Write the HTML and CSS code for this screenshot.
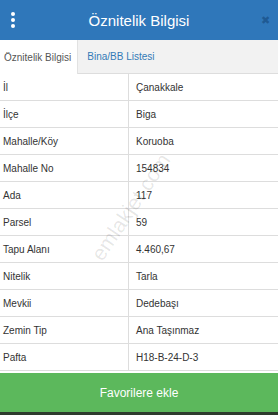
FILE: index.html
```html
<!DOCTYPE html>
<html>
  <head>
    <title>Öznitelik Bilgisi</title>
    <meta name="viewport" content="width=device-width, initial-scale=1">
    <link rel="stylesheet" href="styles.css">
  </head>
  <body>
    <div class="page">
      <div class="header">
        <span class="menu"><i></i><i></i><i></i></span>
        <h1>Öznitelik Bilgisi</h1>
        <span class="close">&#x2716;</span>
      </div>

      <div class="tabs">
        <div class="tab active">Öznitelik Bilgisi</div>
        <div class="tab">Bina/BB Listesi</div>
      </div>

      <div class="content">
        <table class="info">
          <tr><td>İl</td><td>Çanakkale</td></tr>
          <tr><td>İlçe</td><td>Biga</td></tr>
          <tr><td>Mahalle/Köy</td><td>Koruoba</td></tr>
          <tr><td>Mahalle No</td><td>154834</td></tr>
          <tr><td>Ada</td><td>117</td></tr>
          <tr><td>Parsel</td><td>59</td></tr>
          <tr><td>Tapu Alanı</td><td>4.460,67</td></tr>
          <tr><td>Nitelik</td><td>Tarla</td></tr>
          <tr><td>Mevkii</td><td>Dedebaşı</td></tr>
          <tr><td>Zemin Tip</td><td>Ana Taşınmaz</td></tr>
          <tr><td>Pafta</td><td>H18-B-24-D-3</td></tr>
        </table>
        <div class="watermark">emlakjet.com</div>
      </div>

      <button class="fav">Favorilere ekle</button>
      <div class="bottom"></div>
    </div>
  </body>
</html>
```

FILE: styles.css
```css
body { margin: 0; font-family: "Liberation Sans", Arial, sans-serif; color: #333; background: #fff; }
.page { width: 278px; height: 415px; display: flex; flex-direction: column; overflow: hidden; }

.header { height: 40px; background-color: #2f77ba; display: flex; align-items: center; justify-content: space-between; padding: 0 8px 0 11px; flex-shrink: 0; }
.header h1 { margin: 0 0 0 -3px; font-size: 15px; font-weight: normal; color: #fff; }
.menu { display: flex; flex-direction: column; gap: 2px; width: 18px; }
.menu i { display: block; width: 4px; height: 4px; border-radius: 50%; background: #fff; }
.close { width: 18px; text-align: right; font-size: 11px; color: #1f5a94; }

.tabs { height: 33px; background-color: #f2f2f2; border-bottom: 1px solid #ddd; display: flex; flex-shrink: 0; }
.tab { font-size: 10px; padding: 0 9px 0 4px; display: flex; align-items: center; color: #337ab7; }
.tab.active { background: #fff; color: #555; border-right: 1px solid #e2e2e2; margin-bottom: -1px; padding-right: 6px; }
.tab + .tab { padding-left: 9px; }

.content { position: relative; flex: 1; overflow: hidden; }
.info { width: 100%; border-collapse: collapse; font-size: 10px; }
.info td { height: 26px; padding: 0 3px; border-bottom: 1px solid #ddd; }
.info td:first-child { width: 122px; border-right: 1px solid #ddd; }
.info td + td { padding-left: 7px; }

.watermark { position: absolute; left: 131px; top: 133px; transform: translate(-50%, -50%) rotate(-56deg); font-size: 21px; white-space: nowrap; color: rgba(0, 0, 0, 0.1); pointer-events: none; }

.fav { height: 39px; border: none; background-color: #5cb85c; color: #fff; font-family: inherit; font-size: 12px; flex-shrink: 0; }
.bottom { height: 3px; background: #2e3b2e; flex-shrink: 0; }
```
